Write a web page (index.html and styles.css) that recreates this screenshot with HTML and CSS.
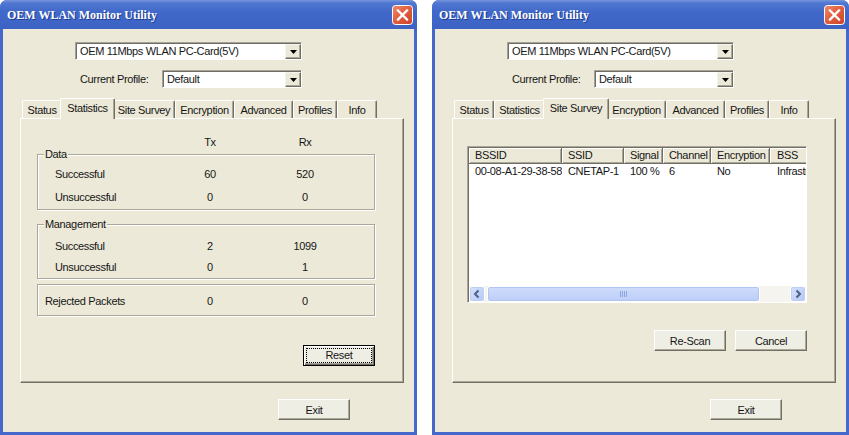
FILE: index.html
```html
<!DOCTYPE html>
<html lang="en">
<head>
    <meta charset="UTF-8">
    <title>OEM WLAN Monitor Utility</title>
    <link rel="stylesheet" href="styles.css">
</head>
<body>
<div class="desktop">

    <!-- Statistics tab -->
    <div class="window">
        <div class="titlebar">
            <span class="title">OEM WLAN Monitor Utility</span>
            <svg class="close" width="21" height="20" viewBox="0 0 21 20">
                <defs>
                    <linearGradient id="cg1" x1="0" y1="0" x2="1" y2="1">
                        <stop offset="0" stop-color="#ee8c6e"/>
                        <stop offset="0.45" stop-color="#e2603f"/>
                        <stop offset="1" stop-color="#c9432a"/>
                    </linearGradient>
                </defs>
                <rect x="0.5" y="0.5" width="20" height="19" rx="3" fill="url(#cg1)" stroke="#fff"/>
                <path d="M6 5.5 L15 14.5 M15 5.5 L6 14.5" stroke="#fff" stroke-width="2.3" stroke-linecap="square"/>
            </svg>
        </div>
        <div class="client">
            <div class="combo adapter">
                <span class="combo-text">OEM 11Mbps WLAN PC-Card(5V)</span>
                <span class="combo-btn"><svg width="7" height="4" viewBox="0 0 7 4"><path d="M0 0H7L3.5 4Z" fill="#000"/></svg></span>
            </div>
            <div class="profile-row">
                <span class="profile-label">Current Profile:</span>
                <div class="combo profile">
                    <span class="combo-text">Default</span>
                    <span class="combo-btn"><svg width="7" height="4" viewBox="0 0 7 4"><path d="M0 0H7L3.5 4Z" fill="#000"/></svg></span>
                </div>
            </div>
            <div class="tabs">
                <div class="tab-strip">
                    <div class="tab t-status">Status</div>
                    <div class="tab t-stats active">Statistics</div>
                    <div class="tab t-survey">Site Survey</div>
                    <div class="tab t-enc">Encryption</div>
                    <div class="tab t-adv">Advanced</div>
                    <div class="tab t-prof">Profiles</div>
                    <div class="tab t-info">Info</div>
                </div>
                <div class="panel">
                    <div class="stat-head">
                        <span></span><span class="num">Tx</span><span class="num">Rx</span>
                    </div>
                    <div class="group group-data">
                        <span class="legend">Data</span>
                        <span>Successful</span><span class="num">60</span><span class="num">520</span>
                        <span>Unsuccessful</span><span class="num">0</span><span class="num">0</span>
                    </div>
                    <div class="group group-mgmt">
                        <span class="legend">Management</span>
                        <span>Successful</span><span class="num">2</span><span class="num">1099</span>
                        <span>Unsuccessful</span><span class="num">0</span><span class="num">1</span>
                    </div>
                    <div class="group group-rejected">
                        <span>Rejected Packets</span><span class="num">0</span><span class="num">0</span>
                    </div>
                    <button class="btn btn-default reset"><span class="focus">Reset</span></button>
                </div>
            </div>
            <div class="footer">
                <button class="btn">Exit</button>
            </div>
        </div>
    </div>

    <!-- Site Survey tab -->
    <div class="window">
        <div class="titlebar">
            <span class="title">OEM WLAN Monitor Utility</span>
            <svg class="close" width="21" height="20" viewBox="0 0 21 20">
                <defs>
                    <linearGradient id="cg2" x1="0" y1="0" x2="1" y2="1">
                        <stop offset="0" stop-color="#ee8c6e"/>
                        <stop offset="0.45" stop-color="#e2603f"/>
                        <stop offset="1" stop-color="#c9432a"/>
                    </linearGradient>
                </defs>
                <rect x="0.5" y="0.5" width="20" height="19" rx="3" fill="url(#cg2)" stroke="#fff"/>
                <path d="M6 5.5 L15 14.5 M15 5.5 L6 14.5" stroke="#fff" stroke-width="2.3" stroke-linecap="square"/>
            </svg>
        </div>
        <div class="client">
            <div class="combo adapter">
                <span class="combo-text">OEM 11Mbps WLAN PC-Card(5V)</span>
                <span class="combo-btn"><svg width="7" height="4" viewBox="0 0 7 4"><path d="M0 0H7L3.5 4Z" fill="#000"/></svg></span>
            </div>
            <div class="profile-row">
                <span class="profile-label">Current Profile:</span>
                <div class="combo profile">
                    <span class="combo-text">Default</span>
                    <span class="combo-btn"><svg width="7" height="4" viewBox="0 0 7 4"><path d="M0 0H7L3.5 4Z" fill="#000"/></svg></span>
                </div>
            </div>
            <div class="tabs">
                <div class="tab-strip">
                    <div class="tab t-status">Status</div>
                    <div class="tab t-stats">Statistics</div>
                    <div class="tab t-survey active">Site Survey</div>
                    <div class="tab t-enc">Encryption</div>
                    <div class="tab t-adv">Advanced</div>
                    <div class="tab t-prof">Profiles</div>
                    <div class="tab t-info">Info</div>
                </div>
                <div class="panel">
                    <div class="listview">
                        <div class="list-head">
                            <div class="col c-bssid">BSSID</div>
                            <div class="col c-ssid">SSID</div>
                            <div class="col c-signal">Signal</div>
                            <div class="col c-chan">Channel</div>
                            <div class="col c-enc">Encryption</div>
                            <div class="col c-bss">BSS</div>
                        </div>
                        <div class="list-body">
                            <div class="list-row">
                                <div class="cell c-bssid">00-08-A1-29-38-58</div>
                                <div class="cell c-ssid">CNETAP-1</div>
                                <div class="cell c-signal">100 %</div>
                                <div class="cell c-chan">6</div>
                                <div class="cell c-enc">No</div>
                                <div class="cell c-bss">Infrastructure</div>
                            </div>
                        </div>
                        <div class="hscroll">
                            <span class="sb-btn"><svg width="14" height="14" viewBox="0 0 14 14"><path d="M8.5 3.5 L5 7 L8.5 10.5" fill="none" stroke="#4d6185" stroke-width="2"/></svg></span>
                            <span class="sb-thumb"><span class="grip"></span></span>
                            <span class="sb-track"></span>
                            <span class="sb-btn"><svg width="14" height="14" viewBox="0 0 14 14"><path d="M5.5 3.5 L9 7 L5.5 10.5" fill="none" stroke="#4d6185" stroke-width="2"/></svg></span>
                        </div>
                    </div>
                    <div class="survey-actions">
                        <button class="btn">Re-Scan</button>
                        <button class="btn">Cancel</button>
                    </div>
                </div>
            </div>
            <div class="footer">
                <button class="btn">Exit</button>
            </div>
        </div>
    </div>

</div>
</body>
</html>
```

FILE: styles.css
```css
body {
    margin: 0;
    background: #fff;
    font-family: "Liberation Sans", Arial, sans-serif;
    font-size: 11px;
    letter-spacing: -0.35px;
    color: #161616;
}

.desktop {
    display: flex;
    gap: 15px;
}

/* window frame */
.window {
    width: 417px;
    height: 435px;
    display: flex;
    flex-direction: column;
    background: #4468cb;
    border-radius: 7px 7px 0 0;
}

.titlebar {
    height: 29px;
    flex: none;
    display: flex;
    align-items: center;
    justify-content: space-between;
    padding: 0 4px 0 7px;
    border-radius: 7px 7px 0 0;
    background: linear-gradient(#7896dd 0, #5077d2 3px, #4169c9 40%, #3c63c4 100%);
}

.title {
    font-family: "Liberation Serif", "Times New Roman", serif;
    font-weight: bold;
    font-size: 12px;
    letter-spacing: 0;
    color: #fff;
    padding-top: 2px;
    text-shadow: 1px 1px 0 #1d3b8e;
}

.close {
    display: block;
}

.client {
    flex: 1;
    margin: 0 3px 3px;
    background: #ece9d8;
    display: flex;
    flex-direction: column;
}

/* combo boxes */
.combo {
    display: flex;
    height: 18px;
    box-sizing: border-box;
    padding: 1px 0 0 1px;
    background: #fff;
    border: 1px solid;
    border-color: #a5a398 #fff #fff #a5a398;
    box-shadow: inset 1px 1px 0 #6f6d63;
}

.combo-text {
    flex: 1;
    padding-left: 3px;
    line-height: 15px;
}

.combo-btn {
    width: 16px;
    flex: none;
    box-sizing: border-box;
    display: flex;
    align-items: center;
    justify-content: center;
    background: #ece9d8;
    border: 1px solid;
    border-color: #f4f3ee #716f64 #716f64 #f4f3ee;
    box-shadow: inset -1px -1px 0 #aca899;
}

.combo-btn svg {
    display: block;
}

.adapter {
    width: 227px;
    margin: 13px 0 0 72px;
}

.profile-row {
    display: flex;
    align-items: center;
    margin: 10px 0 0 77px;
}

.profile-label {
    width: 82px;
}

.profile {
    width: 140px;
}

/* tabs */
.tabs {
    margin: 10px 0 0 17px;
    width: 384px;
}

.tab-strip {
    display: flex;
    align-items: flex-end;
    padding-left: 2px;
}

.tab {
    height: 17px;
    line-height: 18px;
    text-align: center;
    white-space: nowrap;
    border: 1px solid transparent;
    border-top-color: #fff;
    border-left-color: #fff;
    border-right-color: #716f64;
    border-bottom: 0;
    border-radius: 2px 2px 0 0;
    box-shadow: inset -1px 0 0 #aca899;
    background: #ece9d8;
}

.tab.active {
    position: relative;
    z-index: 1;
    height: 20px;
    line-height: 18px;
    padding: 0 2px;
    margin: 0 -2px -1px;
}

.t-status { width: 38px; }
.t-stats { width: 49px; }
.t-survey { width: 60px; }
.t-enc { width: 57px; }
.t-adv { width: 57px; }
.t-prof { width: 42px; }
.t-info { width: 38px; }

.panel {
    height: 265px;
    box-sizing: border-box;
    display: flex;
    flex-direction: column;
    border: 1px solid;
    border-color: #fff #716f64 #716f64 #fff;
    box-shadow: inset -1px -1px 0 #aca899;
}

/* statistics */
.stat-head,
.group {
    display: grid;
    grid-template-columns: 75px 30px 30px;
    column-gap: 65px;
    align-items: center;
}

.stat-head {
    margin: 16px 28px 0 16px;
    padding-left: 18px;
    line-height: 14px;
}

.num {
    text-align: center;
}

.group {
    position: relative;
    margin: 0 28px 0 16px;
    padding-left: 17px;
    border: 1px solid #aca899;
    box-shadow: inset 1px 1px 0 #fff, 1px 1px 0 #fff;
}

.legend {
    position: absolute;
    top: -8px;
    left: 6px;
    padding: 0 1px;
    line-height: 14px;
    background: #ece9d8;
}

.group-data {
    margin-top: 5px;
    padding-top: 7px;
    padding-bottom: 1px;
    grid-auto-rows: 23px;
}

.group-mgmt {
    margin-top: 14px;
    padding-top: 10px;
    padding-bottom: 1px;
    grid-auto-rows: 21px;
}

.group-rejected {
    margin-top: 5px;
    padding: 9px 0 7px 7px;
    grid-template-columns: 85px 30px 30px;
    line-height: 14px;
}

/* buttons */
.btn {
    width: 72px;
    height: 21px;
    padding: 0;
    font: inherit;
    letter-spacing: inherit;
    color: inherit;
    background: #efeee5;
    border: 1px solid;
    border-color: #fff #716f64 #716f64 #fff;
    box-shadow: inset -1px -1px 0 #aca899;
}

.btn-default {
    padding: 2px;
    border-color: #000;
    box-shadow: inset 1px 1px 0 #fff, inset -1px -1px 0 #716f64, inset -2px -2px 0 #aca899;
}

.focus {
    display: block;
    height: 100%;
    box-sizing: border-box;
    border: 1px dotted #000;
    line-height: 13px;
}

.reset {
    align-self: flex-end;
    margin: 29px 28px 0 0;
}

.footer {
    margin: 16px 0 0 275px;
}

/* site survey list */
.listview {
    height: 157px;
    margin: 27px 28px 0 14px;
    box-sizing: border-box;
    display: flex;
    flex-direction: column;
    overflow: hidden;
    padding: 1px 0 0 1px;
    background: #fff;
    border: 1px solid;
    border-color: #aca899 #fff #fff #aca899;
    box-shadow: inset 1px 1px 0 #716f64;
}

.list-head,
.list-row {
    display: flex;
    white-space: nowrap;
}

.list-head {
    height: 16px;
    flex: none;
}

.col,
.cell {
    flex: none;
    box-sizing: border-box;
    padding-left: 6px;
    overflow: hidden;
}

.col {
    line-height: 15px;
    background: #ece9d8;
    border-right: 1px solid #716f64;
    border-bottom: 1px solid #716f64;
    box-shadow: inset 1px 1px 0 #fff, inset -1px -1px 0 #aca899;
}

.cell {
    line-height: 14px;
}

.c-bssid { width: 93px; }
.c-ssid { width: 62px; }
.c-signal { width: 39px; }
.c-chan { width: 48px; }
.c-enc { width: 59px; }
.c-bss { width: 80px; padding-left: 7px; }

.list-body {
    flex: 1;
}

.hscroll {
    height: 16px;
    flex: none;
    display: flex;
    background: #f5f4ef;
}

.sb-btn {
    width: 16px;
    flex: none;
    box-sizing: border-box;
    display: flex;
    align-items: center;
    justify-content: center;
    border: 1px solid #fff;
    border-radius: 3px;
    background: linear-gradient(135deg, #d6e2fd, #b5c8f5);
    box-shadow: inset 0 0 0 1px #bdcdf3;
}

.sb-thumb {
    width: 273px;
    flex: none;
    margin-left: 2px;
    box-sizing: border-box;
    display: flex;
    align-items: center;
    justify-content: center;
    border: 1px solid #fff;
    border-radius: 3px;
    background: linear-gradient(#cfdcfc, #bccef8);
    box-shadow: inset 0 0 0 1px #b2c5f2;
}

.grip {
    width: 8px;
    height: 6px;
    background: repeating-linear-gradient(90deg, #8ea4dc 0 1px, transparent 1px 2px);
}

.sb-track {
    flex: 1;
}

.survey-actions {
    display: flex;
    justify-content: flex-end;
    gap: 9px;
    margin: 27px 28px 0 0;
}
```
